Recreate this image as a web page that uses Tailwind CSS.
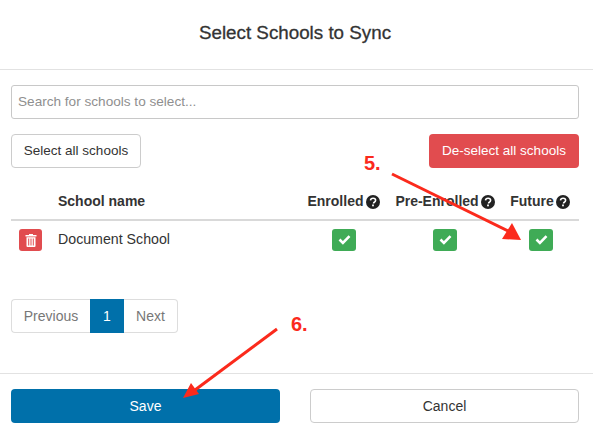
<!DOCTYPE html>
<html>
<head>
<meta charset="utf-8">
<script src="https://cdn.jsdelivr.net/npm/@tailwindcss/browser@4"></script>
</head>
<body class="bg-white">
<div class="relative w-[593px] h-[436px] overflow-hidden bg-white font-['Liberation_Sans',Arial,sans-serif] text-[14px] text-[#333]">
  <header class="h-[70px] border-b border-[#e2e2e2] flex items-center justify-center pb-[2px] pr-[3px]">
    <h1 class="text-[18.8px] font-normal text-[#333] [-webkit-text-stroke:0.3px_#333]">Select Schools to Sync</h1>
  </header>
  <main class="h-[303px] pl-[11px] pr-[14px] pt-[15px]">
    <div class="h-[34px] border border-[#c8c8c8] rounded-[3px] flex items-center px-[6px] text-[13.6px] text-[#8f8f8f]">Search for schools to select...</div>
    <div class="mt-[15px] flex justify-between text-[13.5px]">
      <button class="h-[34px] w-[130px] pt-[1px] border border-[#ccc] rounded-[4px] bg-white text-[#333]">Select all schools</button>
      <button class="h-[34px] w-[150px] pt-[1px] rounded-[4px] bg-[#e14c4f] text-white">De-select all schools</button>
    </div>
    <div class="mt-[19px] h-[34px] grid grid-cols-[47px_240px_91px_112px_78px] items-center border-b-2 border-[#d9d9d9] pb-[3px] font-bold text-[#333]">
      <span></span>
      <span>School name</span>
      <span class="flex items-center justify-center gap-[2px]">Enrolled
        <svg class="w-[14px] h-[14px] shrink-0" viewBox="0 0 14 14"><circle cx="7" cy="7" r="7" fill="#222"/><path d="M4.5 5.4c.1-1.4 1.1-2.2 2.6-2.2 1.4 0 2.5.9 2.5 2.1 0 1-.6 1.5-1.3 1.9-.5.3-.7.5-.7 1v.3" fill="none" stroke="#fff" stroke-width="1.6"/><rect x="6.1" y="9.5" width="1.8" height="1.8" fill="#fff"/></svg>
      </span>
      <span class="flex items-center justify-center gap-[2px]">Pre-Enrolled
        <svg class="w-[14px] h-[14px] shrink-0" viewBox="0 0 14 14"><circle cx="7" cy="7" r="7" fill="#222"/><path d="M4.5 5.4c.1-1.4 1.1-2.2 2.6-2.2 1.4 0 2.5.9 2.5 2.1 0 1-.6 1.5-1.3 1.9-.5.3-.7.5-.7 1v.3" fill="none" stroke="#fff" stroke-width="1.6"/><rect x="6.1" y="9.5" width="1.8" height="1.8" fill="#fff"/></svg>
      </span>
      <span class="flex items-center justify-center gap-[2px]">Future
        <svg class="w-[14px] h-[14px] shrink-0" viewBox="0 0 14 14"><circle cx="7" cy="7" r="7" fill="#222"/><path d="M4.5 5.4c.1-1.4 1.1-2.2 2.6-2.2 1.4 0 2.5.9 2.5 2.1 0 1-.6 1.5-1.3 1.9-.5.3-.7.5-.7 1v.3" fill="none" stroke="#fff" stroke-width="1.6"/><rect x="6.1" y="9.5" width="1.8" height="1.8" fill="#fff"/></svg>
      </span>
    </div>
    <div class="h-[37px] grid grid-cols-[47px_240px_91px_112px_78px] items-center">
      <span class="pl-[8px]">
        <span class="w-[23px] h-[22px] rounded-[3px] bg-[#e14c4f] flex items-center justify-center">
          <svg class="w-[12px] h-[14px]" viewBox="0 0 12 14"><path d="M4 2V1h4v1h3.5v1.4H.5V2z" fill="#fff"/><path fill-rule="evenodd" d="M1.5 4.3h9V13a1 1 0 0 1-1 1h-7a1 1 0 0 1-1-1zM3.2 5.5v7h1v-7zM5.5 5.5v7h1v-7zM7.8 5.5v7h1v-7z" fill="#fff"/></svg>
        </span>
      </span>
      <span class="text-[14.2px]">Document School</span>
      <span class="flex justify-center pl-[1px]">
        <span class="w-[24px] h-[22px] rounded-[3px] bg-[#3fab56] flex items-center justify-center">
          <svg class="w-[13px] h-[11px]" viewBox="0 0 13 11"><path d="M1.5 5.5l3.4 3.4 6.6-6.8" fill="none" stroke="#fff" stroke-width="2.6"/></svg>
        </span>
      </span>
      <span class="flex justify-center">
        <span class="w-[24px] h-[22px] rounded-[3px] bg-[#3fab56] flex items-center justify-center">
          <svg class="w-[13px] h-[11px]" viewBox="0 0 13 11"><path d="M1.5 5.5l3.4 3.4 6.6-6.8" fill="none" stroke="#fff" stroke-width="2.6"/></svg>
        </span>
      </span>
      <span class="flex justify-center pl-[2px]">
        <span class="w-[24px] h-[22px] rounded-[3px] bg-[#3fab56] flex items-center justify-center">
          <svg class="w-[13px] h-[11px]" viewBox="0 0 13 11"><path d="M1.5 5.5l3.4 3.4 6.6-6.8" fill="none" stroke="#fff" stroke-width="2.6"/></svg>
        </span>
      </span>
    </div>
    <nav class="mt-[41px] flex h-[34px] w-[167px] text-[#777]">
      <span class="w-[79px] border border-r-0 border-[#ddd] rounded-l-[4px] flex items-center justify-center">Previous</span>
      <span class="w-[34px] bg-[#0070aa] text-white flex items-center justify-center">1</span>
      <span class="w-[54px] border border-l-0 border-[#ddd] rounded-r-[4px] flex items-center justify-center">Next</span>
    </nav>
  </main>
  <footer class="border-t border-[#e2e2e2] pl-[11px] pr-[14px] pt-[15px] flex justify-between">
    <button class="w-[269px] h-[34px] rounded-[4px] bg-[#0070aa] text-white">Save</button>
    <button class="w-[269px] h-[34px] rounded-[4px] border border-[#ccc] bg-white text-[#333]">Cancel</button>
  </footer>
  <svg class="absolute left-0 top-0 w-[593px] h-[436px] pointer-events-none" viewBox="0 0 593 436">
    <path d="M392 174L510 232" stroke="#fb2a1c" stroke-width="3" fill="none"/>
    <path d="M521 240L502 239L512 223z" fill="#fb2a1c"/>
    <path d="M277 329L195 390" stroke="#fb2a1c" stroke-width="3" fill="none"/>
    <path d="M183 398L191 383L199 394z" fill="#fb2a1c"/>
  </svg>
  <span class="absolute left-[364px] top-[151px] text-[20px] leading-[24px] font-bold text-[#fb2a1c]">5.</span>
  <span class="absolute left-[291px] top-[312px] text-[20px] leading-[24px] font-bold text-[#fb2a1c]">6.</span>
</div>
</body>
</html>
